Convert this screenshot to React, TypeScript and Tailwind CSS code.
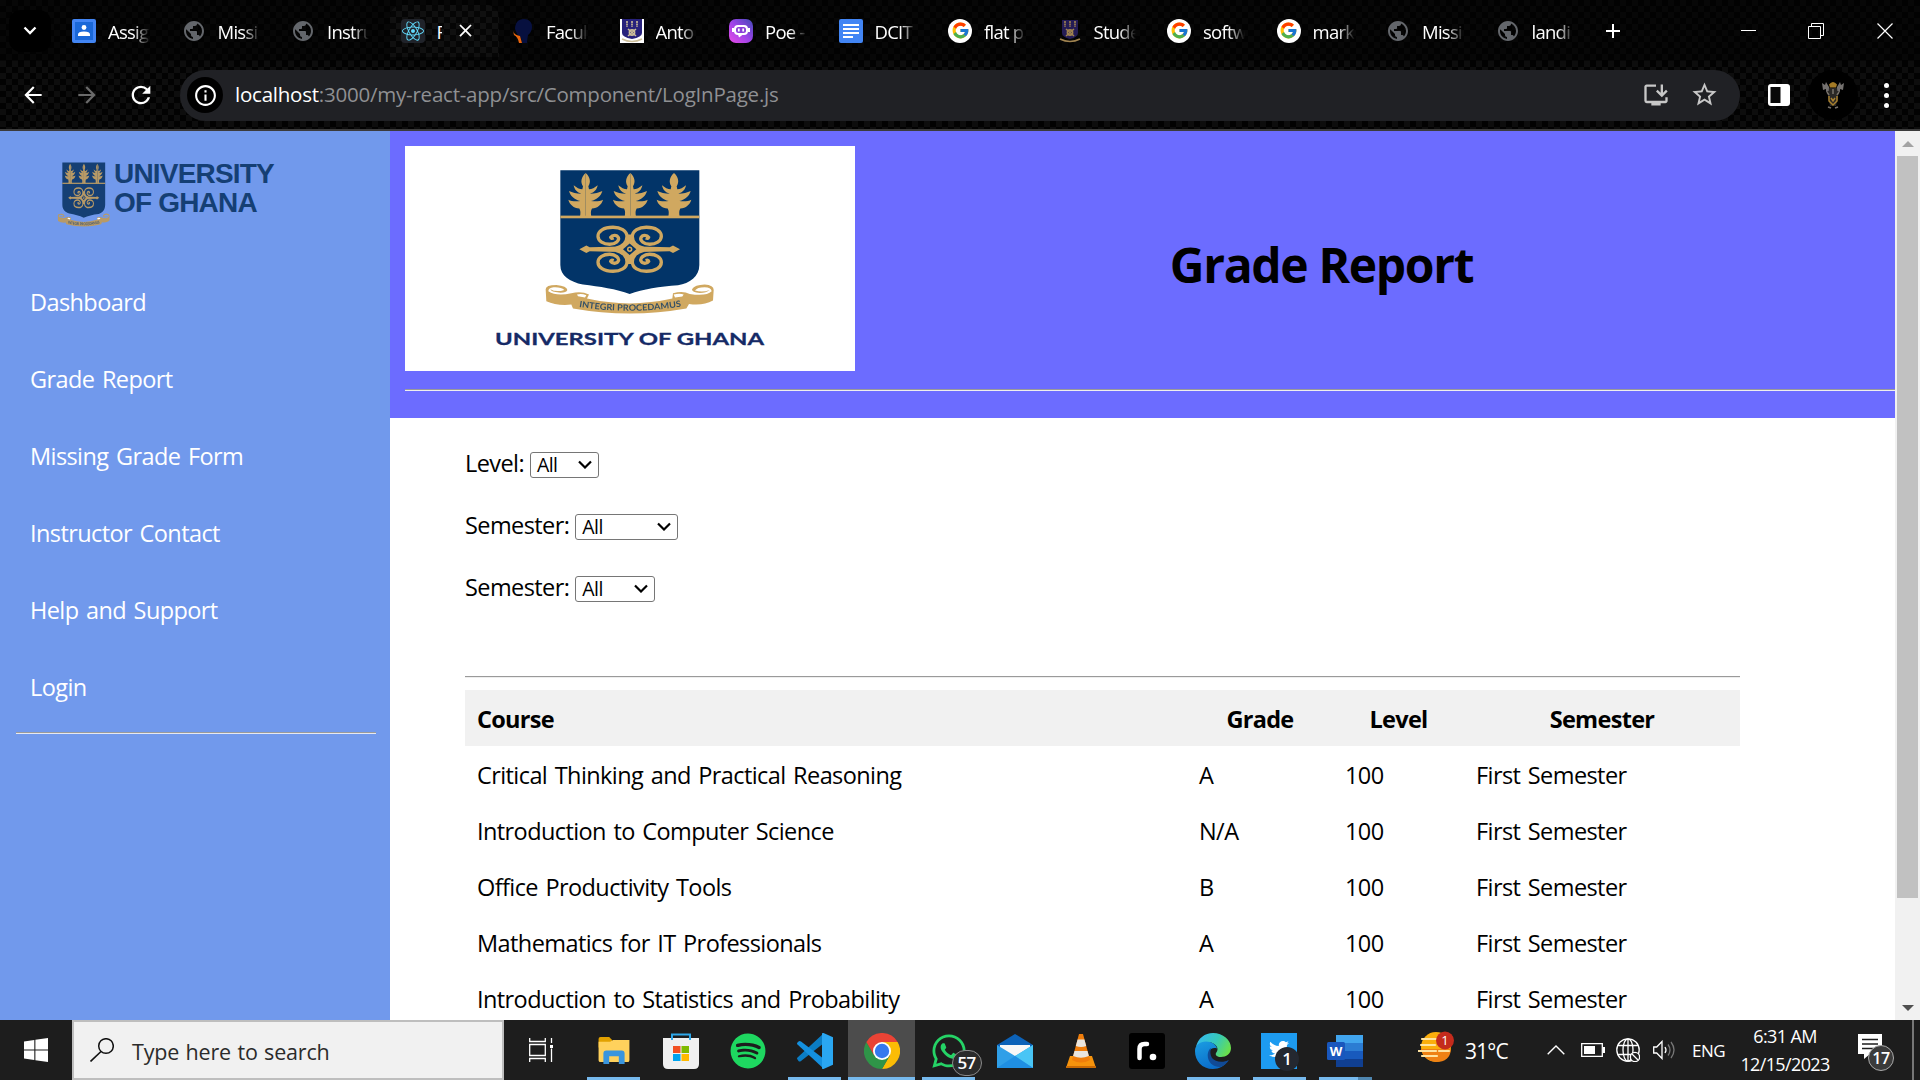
import React from "react";
import { MdArrowBack, MdArrowForward, MdRefresh, MdInfoOutline, MdPublic, MdOutlineInstallDesktop, MdStarBorder, MdAdd, MdClose } from "react-icons/md";
import { FaReact, FaSpotify, FaTwitter, FaWhatsapp } from "react-icons/fa";
import { FcGoogle } from "react-icons/fc";

const GOLD = "#d0a860";

function Tree({ x }: { x: number }) {
  const half =
    "M0 129 C14 141 16 157 8 169 L10 178 C18 178 28 173 36 166 C34 178 26 188 13 191 C28 191 40 188 50 183 C46 198 34 209 16 213 C32 215 44 213 52 209 C48 224 36 234 19 236 C15 242 15 250 17 260 L0 260Z";
  return (
    <g transform={`translate(${x} 0)`}>
      <path d={half} />
      <path d={half} transform="scale(-1 1)" />
    </g>
  );
}

function Crest({ className, blue, gold, id }: { className: string; blue: string; gold: string; id: string }) {
  const spiral =
    "M42 -3 C20 -7 8 -22 8 -38 C8 -56 28 -66 50 -66 C78 -66 95 -54 95 -39 C95 -24 78 -15 60 -15 C42 -15 30 -27 34 -35 C38 -44 52 -44 57 -36 Q56 -31 48 -34";
  return (
    <svg className={className} viewBox="430 118 516 436" preserveAspectRatio="none">
      <path d="M482 121 H899 V405 C899 440 870 460 835 466 C780 470 730 478 690 492 C650 478 600 470 550 464 C510 455 482 438 482 405Z" fill={blue} />
      <g fill={gold}>
        <Tree x={558} />
        <Tree x={692} />
        <Tree x={823} />
        <rect x="482" y="257" width="417" height="8" />
      </g>
      <g transform="translate(690 358)" fill="none" stroke={gold} strokeWidth="10">
        <path d={spiral} />
        <path d={spiral} transform="scale(-1 1)" />
        <path d={spiral} transform="scale(1 -1)" />
        <path d={spiral} transform="scale(-1 -1)" />
        <path d="M-151 0 L-130 -11 L-120 -6 L-30 -8 L-8 -28 V-44 H8 V-28 L30 -8 L120 -6 L130 -11 L151 0 L130 11 L120 6 L30 8 L8 28 V44 H-8 V28 L-30 8 L-120 6 L-130 11Z" fill={gold} stroke="none" />
        <path d="M0 -17 L20 0 L0 17 L-20 0Z" fill={blue} stroke="none" />
        <circle r="8" fill={gold} stroke="none" />
        <circle r="3.500" fill={blue} stroke="none" />
      </g>
      <path d="M438 478 Q438 465 470 465 Q502 468 503 480 Q500 489 478 488 Q455 486 452 478 Q470 488 494 480 Q485 471 462 472 Q446 474 446 484 Q470 500 515 490 Q545 482 568 494 L562 506 Q690 535 818 506 L820 490 Q850 482 870 492 Q920 500 936 484 Q934 472 915 472 Q892 472 886 482 Q910 488 930 480 Q920 489 900 489 Q877 488 877 478 Q885 465 915 464 Q944 466 942 482 L940 512 Q910 528 868 522 L860 536 Q690 566 520 536 L515 524 Q470 528 440 514Z" fill={gold} />
      <path d="M532 494 Q545 489 560 496 L556 503 L535 499Z M826 503 L822 494 Q840 489 852 494 L848 500Z" fill="#fff" />
      <path id={id} d="M538 531 Q690 555 850 529" fill="none" />
      <text fill={blue} fontSize="26" opacity=".75" className="font-['Lato'] font-bold">
        <textPath href={`#${id}`} textLength="308" lengthAdjust="spacingAndGlyphs">INTEGRI PROCEDAMUS</textPath>
      </text>
    </svg>
  );
}

function MiniCrest({ light }: { light?: boolean }) {
  return (
    <svg viewBox="0 0 24 24" className="h-6 w-6">
      {light && <rect width="24" height="24" fill="#fff" />}
      <path d={light ? "M2 0h20v14q0 4-10 6q-10-2-10-6z" : "M4 1h16v13q0 4-8 6q-8-2-8-6z"} fill={light ? "#28227c" : "#241c55"} />
      <g stroke={light ? "#cdbf9a" : "#a08350"} strokeWidth="1.6" fill="none">
        <path d="M7 2v6M12 2v6M17 2v6" strokeDasharray="2 .6" />
        <circle cx="12" cy="13.5" r="2.600" />
        <path d="M8 10l8 7M16 10l-8 7M2 20q10 5 20 0" />
      </g>
    </svg>
  );
}

const Globe = () => <MdPublic className="h-[26px] w-[26px] text-[#63666b]" />;
const Google = () => (
  <span className="flex h-6 w-6 items-center justify-center rounded-full bg-white"><FcGoogle className="h-[19px] w-[19px]" /></span>
);

const Classroom = () => (
  <svg viewBox="0 0 24 24" className="h-6 w-6">
    <rect width="24" height="24" rx="2" fill="#4285f4" />
    <rect x="3" y="3" width="18" height="18" fill="#1a68d8" />
    <circle cx="12" cy="8.5" r="2.4" fill="#fff" />
    <path d="M6 17v-1.5q0-3 6-3t6 3V17z" fill="#fff" />
  </svg>
);
const ReactIcon = () => (
  <span className="flex h-6 w-6 items-center justify-center rounded bg-[#20232a]"><FaReact className="h-[22px] w-[22px] text-[#61dafb]" /></span>
);
const Faculty = () => (
  <svg viewBox="0 0 24 24" className="h-6 w-6">
    <path d="M14 0C8 0 5 4 5 10L7 15L11 19L12 24H17L18 16C24 12 24 0 14 0Z" fill="#07103f" />
    <path d="M3 12Q4 16 10 17L12 24H9Q8 18 4 16Z" fill="#e8650e" />
  </svg>
);
const Poe = () => (
  <svg viewBox="0 0 24 24" className="h-6 w-6">
    <defs><linearGradient id="poe" x1="1" y1="0" x2="0" y2="1"><stop stopColor="#4149b5" /><stop offset=".5" stopColor="#9c43e8" /><stop offset="1" stopColor="#ea4be8" /></linearGradient></defs>
    <rect width="24" height="24" rx="7" fill="url(#poe)" />
    <rect x="5" y="6" width="14" height="10" rx="4" fill="#fff" />
    <path d="M3 9h2v4H3zM19 9h2v4h-2zM9 15.500h5l-4 3z" fill="#fff" />
    <rect x="7" y="8" width="10" height="6" rx="2.500" fill="#8a3fd8" />
    <path d="M9.800 9.500v3M14.200 9.500v3" stroke="#fff" strokeWidth="1.800" />
  </svg>
);
const Docs = () => (
  <svg viewBox="0 0 24 24" className="h-6 w-6">
    <rect width="24" height="24" rx="2" fill="#4285f4" />
    <path d="M4 6h16M4 10h16M4 14h16M4 18h10" stroke="#fff" strokeWidth="2" />
  </svg>
);

const tabs: { label: string; icon: React.ReactNode; active?: boolean }[] = [
  { label: "Assig", icon: <Classroom /> },
  { label: "Missi", icon: <Globe /> },
  { label: "Instru", icon: <Globe /> },
  { label: "R", icon: <ReactIcon />, active: true },
  { label: "Facul", icon: <Faculty /> },
  { label: "Anto", icon: <MiniCrest light /> },
  { label: "Poe -", icon: <Poe /> },
  { label: "DCIT", icon: <Docs /> },
  { label: "flat p", icon: <Google /> },
  { label: "Stude", icon: <MiniCrest /> },
  { label: "softw", icon: <Google /> },
  { label: "mark", icon: <Google /> },
  { label: "Missi", icon: <Globe /> },
  { label: "landi", icon: <Globe /> },
];

function BrowserBar() {
  return (
    <header className="h-[131px] border-b-2 border-[#3b3b3b] bg-[#050505] text-white">
      <div className="flex h-[61px] items-center bg-[repeating-conic-gradient(#020202_0_25%,#070707_0_50%)] bg-[length:12px_12px]">
        <div className="ml-[9px] flex h-[42px] w-[42px] items-center justify-center rounded-xl bg-black">
          <svg viewBox="0 0 14 10" className="h-[10px] w-[14px]"><path d="M1.500 1.500L7 7l5.500-5.500" fill="none" stroke="#fff" strokeWidth="2.300" /></svg>
        </div>
        <div className="ml-[10px] flex">
          {tabs.map((t, i) => (
            <div key={i} className={"flex h-[52px] w-[109.500px] items-center pl-[11px] " + (t.active ? "rounded-t-xl bg-[repeating-conic-gradient(#050505_0_25%,#101010_0_50%)] bg-[length:12px_12px]" : "")}>
              <span className="flex w-6 shrink-0 justify-center">{t.icon}</span>
              <span className={(t.active ? "w-[5px] overflow-hidden" : "w-[42px] [mask-image:linear-gradient(to_right,black_60%,transparent)]") + " ml-3 mt-[2px] whitespace-nowrap text-[18.500px] tracking-[-0.04em]"}>{t.label}</span>
              {t.active && <MdClose className="ml-[13px] h-[21px] w-[21px]" />}
            </div>
          ))}
        </div>
        <MdAdd className="ml-[7px] h-6 w-6" />
        <div className="ml-auto flex h-full">
          <div className="flex w-[68px] items-center justify-center"><div className="h-px w-[15px] bg-white" /></div>
          <div className="flex w-[68px] items-center justify-center">
            <svg viewBox="0 0 16 16" className="h-4 w-4"><path d="M.5 3.500h12v12H.5zM3.500 3.500v-3h12v12h-3" fill="none" stroke="#fff" /></svg>
          </div>
          <div className="flex w-[70px] items-center justify-center pr-[1px]">
            <svg viewBox="0 0 16 16" className="h-4 w-4"><path d="M.5.5l15 15M15.500.5l-15 15" stroke="#fff" strokeWidth="1.200" /></svg>
          </div>
        </div>
      </div>
      <div className="flex h-[68px] items-center bg-[repeating-conic-gradient(#020202_0_25%,#0d0d0d_0_50%)] bg-[length:12px_12px]">
        <MdArrowBack className="ml-[20px] h-[26px] w-[26px]" />
        <MdArrowForward className="ml-[28px] h-[26px] w-[26px] text-[#6b6b6b]" />
        <MdRefresh className="ml-[27px] h-[28px] w-[28px]" />
        <div className="ml-[25px] flex h-[51px] w-[1560px] items-center rounded-full bg-[#202125]">
          <div className="ml-[7px] flex h-[36px] w-[36px] items-center justify-center rounded-full bg-black"><MdInfoOutline className="h-[25px] w-[25px]" /></div>
          <div className="mb-[2px] ml-[12px] whitespace-nowrap text-[20.500px] tracking-[-0.011em] text-[#8f9093]"><span className="text-white">localhost</span>:3000/my-react-app/src/Component/LogInPage.js</div>
          <MdOutlineInstallDesktop className="mb-[1px] ml-auto h-[28px] w-[28px] text-[#c7c7c7]" />
          <MdStarBorder className="mb-[1px] ml-[20px] mr-[21px] h-[29px] w-[29px] text-[#c7c7c7]" />
        </div>
        <svg viewBox="0 0 22 22" className="ml-[28px] h-[22px] w-[22px]"><rect width="22" height="22" rx="3" fill="#fff" /><rect x="2.500" y="3" width="10" height="16" fill="#080808" /></svg>
        <div className="ml-[18px] flex h-[50px] w-[50px] items-center justify-center rounded-full bg-black">
          <svg viewBox="0 0 24 30" className="h-[30px] w-6">
            <path d="M1 3l3 2 1-3 3 5 1 4-4 1 0-3-3 1zM23 3l-3 2-1-3-3 5-1 4 4 1 0-3 3 1z" fill="#74716f" />
            <path d="M8 8h8l1 8-2 10H9L7 16z" fill="#2a2826" />
            <path d="M8 4.500q4-5 8 0l-1 3H9z" fill="#a57b26" />
            <path d="M8 16v5l4 4 4-4v-5M10 18l2 3 2-3" fill="none" stroke="#a8802f" strokeWidth="1.500" />
            <path d="M6 12l2 3M18 12l-2 3M7 27l3 1M17 27l-3 1M12 9v5" stroke="#77716a" strokeWidth="1.600" />
          </svg>
        </div>
        <div className="ml-[26px] flex flex-col gap-[5px]">
          <i className="h-[5px] w-[5px] rounded-full bg-white" /><i className="h-[5px] w-[5px] rounded-full bg-white" /><i className="h-[5px] w-[5px] rounded-full bg-white" />
        </div>
      </div>
    </header>
  );
}

const nav = ["Dashboard", "Grade Report", "Missing Grade Form", "Instructor Contact", "Help and Support", "Login"];

function Sidebar() {
  return (
    <aside className="w-[390px] shrink-0 bg-[#7199ec] pl-[15px] pr-[14px] pt-[31px]">
      <div className="ml-[42px] flex h-[66px]">
        <Crest id="motto-side" className="h-[65px] w-[53px]" blue="#153f74" gold="#b89a66" />
        <div className="-mt-[3px] ml-[4px] whitespace-nowrap font-['Liberation_Sans'] text-[28px] font-bold leading-[29px] text-[#153f74]">
          <div className="tracking-[-0.029em]">UNIVERSITY</div>
          <div className="tracking-[-0.029em]">OF GHANA</div>
        </div>
      </div>
      <nav className="pt-[36px]">
        {nav.map((n) => (
          <div key={n} className="flex h-[77px] items-center pl-[15px] text-[23.500px] tracking-[-0.025em] text-white [word-spacing:2px]">{n}</div>
        ))}
      </nav>
      <div className="ml-px mt-[6px] h-[2px] border-b border-t border-b-[#e6e9f2] border-t-[#9a9a9a]" />
    </aside>
  );
}

const rows = [
  ["Critical Thinking and Practical Reasoning", "A"],
  ["Introduction to Computer Science", "N/A"],
  ["Office Productivity Tools", "B"],
  ["Mathematics for IT Professionals", "A"],
  ["Introduction to Statistics and Probability", "A"],
];

function Select({ width }: { width: string }) {
  return (
    <div className={width + " ml-[6px] mt-[1px] flex h-[26px] items-center justify-between rounded-[3px] border border-[#767676] bg-white pl-[6px] pr-[6px] text-[19.500px] tracking-[-0.03em]"}>
      All
      <svg viewBox="0 0 14 9" className="h-[9px] w-[14px]"><path d="M1 1.500l6 6 6-6" fill="none" stroke="#000" strokeWidth="2.200" /></svg>
    </div>
  );
}

const cols = "grid grid-cols-[722px_146px_131px_276px] h-[56px] items-center";

function Main() {
  return (
    <main className="w-[1505px] overflow-hidden bg-white">
      <section className="h-[287px] bg-[#6c6cff] pl-[15px] pt-[15px]">
        <div className="flex">
          <svg viewBox="0 0 450 225" className="h-[225px] w-[450px] bg-white">
            <svg x="138" y="23.300" width="172" height="145.300"><Crest id="motto-main" className="" blue="#023468" gold={GOLD} /></svg>
            <text x="90" y="198.500" fontSize="17.500" textLength="269" lengthAdjust="spacingAndGlyphs" fill="#152a66" stroke="#152a66" strokeWidth=".3" className="font-['Lato'] font-bold">UNIVERSITY OF GHANA</text>
          </svg>
          <h1 className="flex flex-1 items-center justify-center pr-[107px] pt-[12px] text-[48px] font-bold tracking-[-0.028em] text-black">Grade Report</h1>
        </div>
        <div className="mt-[18px] h-[2px] border-b border-t border-b-[#eeeeee] border-t-[#9a9a9a]" />
      </section>
      <section className="pl-[75px] pt-[15px] text-[23.500px] tracking-[-0.025em] text-black">
        <div className="flex h-[62px] items-center">Level:<Select width="w-[69px]" /></div>
        <div className="flex h-[62px] items-center">Semester:<Select width="w-[103px]" /></div>
        <div className="flex h-[62px] items-center">Semester:<Select width="w-[80px]" /></div>
        <div className="mt-[57px] h-[2px] w-[1275px] border-b border-t border-b-[#eeeeee] border-t-[#9a9a9a]" />
        <div className="mt-[12px] w-[1275px]">
          <div className={cols + " bg-[#f1f1f1] pt-[3px] text-center font-bold tracking-[-0.03em]"}>
            <div className="pl-3 text-left">Course</div><div>Grade</div><div>Level</div><div>Semester</div>
          </div>
          {rows.map(([c, g]) => (
            <div key={c} className={cols + " pt-[3px] [word-spacing:2px]"}>
              <div className="pl-3">{c}</div><div className="pl-3">{g}</div><div className="pl-3">100</div><div className="pl-3">First Semester</div>
            </div>
          ))}
        </div>
      </section>
    </main>
  );
}

function Scrollbar() {
  return (
    <div className="flex w-[25px] flex-col items-center bg-[#f1f1f1]">
      <svg viewBox="0 0 12 6" className="mt-[10px] h-[6px] w-3"><path d="M6 0l6 6H0z" fill="#a3a3a3" /></svg>
      <div className="mt-[9px] h-[742px] w-[21px] bg-[#c1c1c1]" />
      <svg viewBox="0 0 12 6" className="mb-[9px] mt-auto h-[6px] w-3"><path d="M6 6l6-6H0z" fill="#505050" /></svg>
    </div>
  );
}

const Explorer = () => (
  <svg viewBox="0 0 32 28" className="h-[27px] w-8">
    <path d="M0 2q0-2 2-2h9l3 3v8H0z" fill="#e2a100" />
    <path d="M0 5h12l3-2h17v21q0 2-2 2H2q-2 0-2-2z" fill="#ffd15c" />
    <path d="M5 28V17q0-3 3-3h16q3 0 3 3v11h-6v-8H11v8z" fill="#3a95dd" />
  </svg>
);
const Store = () => (
  <svg viewBox="0 0 36 36" className="h-9 w-9">
    <path d="M0 5h36v26q0 5-5 5H5q-5 0-5-5z" fill="#f0f0f0" />
    <path d="M9 7V1.500h18V7" fill="none" stroke="#2fa8ea" strokeWidth="2" />
    <path d="M10 13h7.500v7H10z" fill="#f25022" /><path d="M18.500 13H26v7h-7.500z" fill="#7fba00" />
    <path d="M10 21h7.500v7H10z" fill="#00a4ef" /><path d="M18.500 21H26v7h-7.500z" fill="#ffb900" />
  </svg>
);
const Code = () => (
  <svg viewBox="0 0 36 36" className="h-9 w-9">
    <path d="M27 0v10L4 28q-1.500 1-2.500 0L.5 26.500q-1-1 0-2z" fill="#0b7dc4" />
    <path d="M27 36V26L4 8.500q-1.500-1-2.500 0L.5 9.500q-1 1 0 2z" fill="#1490df" />
    <path d="M26.500 0L36 4.200V31.800L26.500 36q-1.500.3-1.500-1V1q0-1.300 1.500-1z" fill="#2aa7f2" />
  </svg>
);
const Chrome = () => (
  <svg viewBox="0 0 36 36" className="h-9 w-9">
    <path d="M18 9H33.600A18 18 0 0 1 18 36L25.800 22.500z" fill="#fbbc05" />
    <path d="M10.200 22.500L2.400 9A18 18 0 0 0 18 36L25.800 22.500z" fill="#2f9448" />
    <path d="M33.600 9A18 18 0 0 0 2.400 9L10.200 22.500L18 9z" fill="#ea4335" />
    <circle cx="18" cy="18" r="9" fill="#fff" /><circle cx="18" cy="18" r="7.200" fill="#3579ee" />
  </svg>
);
const Mail = () => (
  <svg viewBox="0 0 36 34" className="h-[34px] w-9">
    <path d="M0 11L18 0l18 11v8H0z" fill="#0c62b8" /><path d="M3 11h30v12H3z" fill="#f7f7f7" />
    <path d="M0 11l18 11 18-11v23H0z" fill="#2f9fe8" /><path d="M36 11v23L18 22z" fill="#49c5f5" /><path d="M0 34l18-12 18 12z" fill="#1f8fe3" />
  </svg>
);
const Vlc = () => (
  <svg viewBox="0 0 30 34" className="h-[34px] w-[30px]">
    <path d="M4 22h22l4 12H0z" fill="#f6930c" /><path d="M0 32h30v2H0z" fill="#c96a04" />
    <path d="M13 0h4l7 26q-9 5-18 0z" fill="#ef7d0b" />
    <path d="M11.600 5.500h6.800l1.800 6.500q-5 2-10.400 0zM8.500 17h13l1.400 5q-8 3.500-15.800 0z" fill="#e9e5df" />
  </svg>
);
const LetterApp = () => (
  <svg viewBox="0 0 36 36" className="h-9 w-9">
    <rect width="36" height="36" rx="3" fill="#000" />
    <path d="M10.500 25V16q0-5 5-5h2.500" fill="none" stroke="#fff" strokeWidth="4.500" strokeLinecap="round" /><circle cx="24" cy="24" r="3.300" fill="#fff" />
  </svg>
);
const Edge = () => (
  <svg viewBox="0 0 36 36" className="h-9 w-9">
    <defs>
      <linearGradient id="edge-top" x1="0" x2="1" y1=".2" y2=".6"><stop stopColor="#35b8f2" /><stop offset=".55" stopColor="#36c9b8" /><stop offset="1" stopColor="#6ae04a" /></linearGradient>
      <linearGradient id="edge-low" x1="0" x2=".5" y1="0" y2="1"><stop stopColor="#1b9de2" /><stop offset="1" stopColor="#0a6cc9" /></linearGradient>
    </defs>
    <path d="M1 14C3 5 10 0 18 0c10 0 18 7 18 15 0 6-5 9-10 9-4 0-6-2-5-4 5-6-3-12-10-11Q4 10 1 14z" fill="url(#edge-top)" />
    <path d="M0 18C0 12 5 8.500 11 8.500c6 0 10 3 11 7-7-2-9 4-7 9 3 6 11 8 18 3-3 5-9 8.500-15 8.500C7 36 0 28 0 18z" fill="url(#edge-low)" />
    <path d="M16 15c-6 4-4 19 9 19 4-1 7-4 9-7-6 3-14 2-17-2-2-3-2-7-1-10z" fill="#114a95" />
  </svg>
);
const Word = () => (
  <svg viewBox="0 0 36 32" className="h-8 w-9">
    <path d="M9 0h27v8H9z" fill="#41a5ee" /><path d="M9 8h27v8H9z" fill="#2b7cd3" /><path d="M9 16h27v8H9z" fill="#185abd" /><path d="M9 24h27v8H9z" fill="#103f91" />
    <rect y="7" width="18" height="18" rx="1.500" fill="#1957bd" />
    <text x="9" y="21" textAnchor="middle" fill="#fff" fontSize="13" className="font-['Open_Sans'] font-bold">W</text>
  </svg>
);
const Whatsapp = () => (
  <span className="relative"><FaWhatsapp className="h-[38px] w-[38px] text-[#25d366]" />
    <b className="absolute left-[22px] top-[18px] flex h-[26px] w-[30px] items-center justify-center rounded-full border border-[#8b8b8b] bg-[#2b2b2b] text-[17px] font-semibold tracking-[-0.04em] text-white">57</b>
  </span>
);
const Tweets = () => (
  <span className="relative flex h-9 w-9 items-center justify-center bg-[#1d9bf0]"><FaTwitter className="mb-1 h-5 w-5 text-white" />
    <b className="absolute left-[14px] top-[14px] flex h-[24px] w-[24px] items-center justify-center rounded-full bg-[#242830] text-[17px] font-semibold text-white">1</b>
  </span>
);

const apps: { icon: React.ReactNode; open?: boolean; active?: boolean; grouped?: boolean }[] = [
  { icon: <Explorer />, open: true }, { icon: <Store /> }, { icon: <FaSpotify className="h-9 w-9 text-[#1ed760]" /> },
  { icon: <Code />, open: true }, { icon: <Chrome />, open: true, active: true }, { icon: <Whatsapp />, open: true },
  { icon: <Mail /> }, { icon: <Vlc /> }, { icon: <LetterApp /> }, { icon: <Edge />, open: true }, { icon: <Tweets />, open: true },
  { icon: <Word />, open: true, grouped: true },
];

function Taskbar() {
  return (
    <footer className="flex h-[60px] items-stretch bg-[#1d1d1d] text-white">
      <div className="flex w-[72px] items-center justify-center">
        <svg viewBox="0 0 24 24" className="h-6 w-6"><path d="M0 3.400L10.300 2v9.500H0zM11.400 1.800L24 0v11.500H11.400zM0 12.500h10.300V22L0 20.600zM11.400 12.500H24V24l-12.600-1.800z" fill="#fff" /></svg>
      </div>
      <div className="flex w-[432px] items-center border-2 border-[#bebebe] bg-[#f1f1f1]">
        <svg viewBox="0 0 24 24" className="ml-[16px] h-6 w-6"><circle cx="16" cy="8" r="7.300" fill="none" stroke="#111" strokeWidth="1.500" /><path d="M11 13.500L.5 23.500" stroke="#111" strokeWidth="1.600" /></svg>
        <span className="ml-[18px] mt-[4px] text-[21.500px] tracking-[-0.008em] text-[#2b2b2b] [word-spacing:1px]">Type here to search</span>
      </div>
      <div className="flex w-[76px] items-center justify-center pr-[3px]">
        <svg viewBox="0 0 24 24" className="h-6 w-6"><path d="M.7 0v3.500h15.600V0M.7 24v-3.500h15.600V24M.7 6.500h15.600v11H.7zM22.500 0v5M22.500 10.500V24" fill="none" stroke="#fff" strokeWidth="1.300" /><rect x="21" y="7" width="3" height="3" fill="#fff" /></svg>
      </div>
      {apps.map((a, i) => (
        <div key={i} className={(i < 6 ? "w-[67px]" : "w-[66px]") + " flex shrink-0 flex-col items-center " + (a.active ? "bg-[#4c4c4c]" : "")}>
          <div className="flex h-[57px] items-center pt-[4px]">{a.icon}</div>
          {a.open && <div className={"h-[3px] bg-[#76b9ed] " + (a.active ? "w-full" : "w-[53px]") + (a.grouped ? " border-r-[14px] border-[#4f86b0]" : "")} />}
        </div>
      ))}
      <div className="ml-[40px] flex items-center">
        <svg viewBox="0 0 36 32" className="mb-[6px] h-8 w-9">
          <circle cx="18" cy="16" r="15" fill="#fbae0c" /><path d="M3 18h30q-1 13-15 13Q6 30 3 18z" fill="#ef8114" />
          <path d="M4 8h14M3 14h14M0 20h18M4 25h15M21 20h10" stroke="#ffe3a0" strokeWidth="2.200" strokeLinecap="round" />
          <circle cx="27" cy="9.500" r="9" fill="#c42b1c" />
          <text x="27" y="14" textAnchor="middle" fill="#fff" fontSize="13" className="font-['Open_Sans']">1</text>
        </svg>
        <span className="ml-[11px] mt-[3px] w-[45px] whitespace-nowrap text-[21px] tracking-[-0.04em]">31°C</span>
      </div>
      <div className="ml-auto flex items-center">
        <svg viewBox="0 0 18 10" className="h-[10px] w-[18px]"><path d="M.7 9.300L9 1l8.300 8.300" fill="none" stroke="#fff" strokeWidth="1.400" /></svg>
        <svg viewBox="0 0 24 14" className="ml-[16px] h-[14px] w-6"><path d="M.7.7h20.600v12.600H.7z" fill="none" stroke="#fff" strokeWidth="1.300" /><path d="M3 3h11v8H3zM22 4h2v6h-2z" fill="#fff" /></svg>
        <svg viewBox="0 0 24 24" className="ml-[11px] h-6 w-6" fill="none" stroke="#fff" strokeWidth="1.300"><circle cx="12" cy="12" r="11.200" /><ellipse cx="12" cy="12" rx="5" ry="11.200" /><path d="M2 7.500h20M2 16.500h20M12 1v22" /><circle cx="19" cy="19" r="4.600" fill="#1d1d1d" /><path d="M16 16l6 6" /></svg>
        <svg viewBox="0 0 22 20" className="ml-[13px] h-5 w-[22px]" fill="none" strokeWidth="1.300"><path d="M.7 7h3L9 1.500v17L3.700 13h-3z" stroke="#fff" /><path d="M12 7q2 3 0 6" stroke="#fff" /><path d="M15 4.500q4 5.500 0 11M18 2q6 8 0 16" stroke="#777" /></svg>
        <span className="ml-[17px] mt-[2px] w-[34px] whitespace-nowrap text-[17px] tracking-[-0.03em]">ENG</span>
        <div className="ml-[10px] w-[98px] whitespace-nowrap text-center text-[18px] leading-[28px] tracking-[-0.035em]"><div>6:31 AM</div><div>12/15/2023</div></div>
        <div className="relative ml-[24px] mt-[4px] h-9 w-9">
          <svg viewBox="0 0 36 36" className="h-9 w-9"><path d="M0 0h24v20H12l-6 5v-5H0z" fill="#fff" /><path d="M4 5.500h16M4 10h16M4 14.500h11" stroke="#1d1d1d" strokeWidth="1.300" /></svg>
          <b className="absolute left-[10px] top-[11px] flex h-[26px] w-[26px] items-center justify-center rounded-full border border-[#aaa] bg-[#3b3b3b] text-[16px] font-semibold tracking-[-0.03em]">17</b>
        </div>
        <div className="ml-[18px] mr-[6px] h-[60px] w-[2px] bg-[#777]" />
      </div>
    </footer>
  );
}

export default function App() {
  return (
    <div className="flex h-[1080px] w-[1920px] flex-col overflow-hidden font-['Open_Sans',sans-serif]">
      <BrowserBar />
      <div className="flex h-[889px] overflow-hidden"><Sidebar /><Main /><Scrollbar /></div>
      <Taskbar />
    </div>
  );
}
